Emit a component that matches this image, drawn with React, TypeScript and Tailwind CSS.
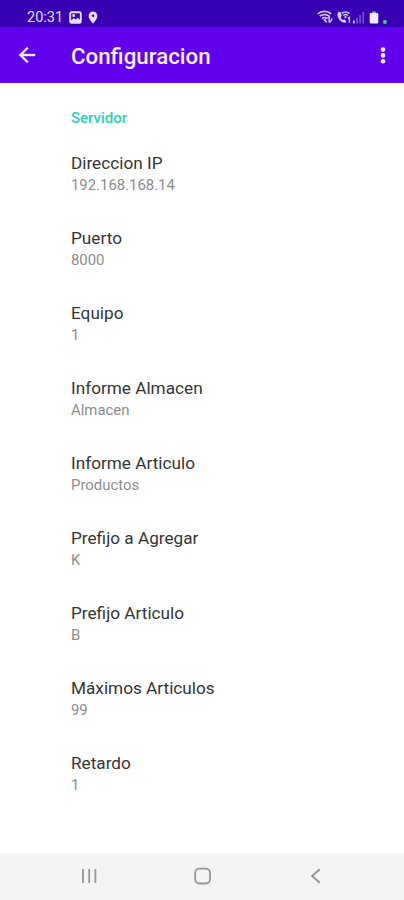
interface Preference {
  title: string;
  summary: string;
}

const preferences: Preference[] = [
  { title: "Direccion IP", summary: "192.168.168.14" },
  { title: "Puerto", summary: "8000" },
  { title: "Equipo", summary: "1" },
  { title: "Informe Almacen", summary: "Almacen" },
  { title: "Informe Articulo", summary: "Productos" },
  { title: "Prefijo a Agregar", summary: "K" },
  { title: "Prefijo Articulo", summary: "B" },
  { title: "Máximos Articulos", summary: "99" },
  { title: "Retardo", summary: "1" },
];

function StatusBar() {
  return (
    <div className="flex h-[27px] shrink-0 items-center bg-[#3700b3] pt-[7px] pl-[27px] pr-[17px] text-[#e6dcff]">
      <span className="w-[42px] pt-[2px] text-[14.5px] leading-5">20:31</span>
      {/* Image notification */}
      <svg width="13" height="13" viewBox="0 0 13 13" className="shrink-0">
        <rect x="1.2" y="1.2" width="10.6" height="10.6" rx="1.4" fill="none" stroke="currentColor" strokeWidth="1.9" />
        <path d="M2 11 2 9.400 4.800 7l2 1.600 2-2L11 9v2Z" fill="currentColor" />
        <rect x="3.400" y="3.200" width="2.600" height="2.600" fill="currentColor" />
      </svg>
      {/* Location */}
      <svg width="10" height="13" viewBox="0 0 10 13" className="ml-[6px] shrink-0">
        <path
          fillRule="evenodd"
          d="M5 .5a4.400 4.400 0 0 0-4.400 4.400C.6 8 5 12.500 5 12.500S9.400 8 9.400 4.900A4.400 4.400 0 0 0 5 .5Zm0 3a1.300 1.300 0 1 1 0 2.600 1.300 1.300 0 0 1 0-2.600Z"
          fill="currentColor"
        />
      </svg>
      <div className="ml-auto flex items-center text-[#d8ccf8]">
        {/* Wifi */}
        <svg width="17" height="14" viewBox="0 0 17 14" className="shrink-0">
          <g fill="none" stroke="currentColor" strokeWidth="1.600">
            <path d="M.8 3.800C4.400.6 10.600.6 14.200 3.800" />
            <path d="M2.800 6.200c2.600-2.300 6.800-2.300 9.400 0" />
            <path d="M5 8.600c1.400-1.200 3.600-1.200 5 0" />
          </g>
          <path d="m6.200 9.800 2-1 2.400 3.600H8.800Z" fill="currentColor" />
          <path d="m10.400 8.200 1.800-1.400v5.800M15.200 8.400 13.800 11l-1.600 1.600" fill="none" stroke="currentColor" strokeWidth="1.400" />
        </svg>
        {/* Wifi calling */}
        <svg width="16" height="14" viewBox="0 0 16 14" className="ml-[2px] shrink-0">
          <path
            d="M2.800 1.800C1.200 3 1 5 2 7.200c1 2.400 3 4.400 5.300 5.300 1.300.5 2.500.3 3.100-.9L8.500 9.200l-1.600.9C5.900 9.500 5.100 8.500 4.600 7.200l1.200-1.100L4.500 2Z"
            fill="currentColor"
          />
          <path d="M5.600 3.400c2.300-2 5.600-2 7.800 0M7.200 5.500c1.400-1.300 3.200-1.300 4.600 0" fill="none" stroke="currentColor" strokeWidth="1.500" />
          <circle cx="9.500" cy="7.200" r="1.100" fill="currentColor" />
          <path d="m11.800 8.400 1.600-1v5.400" fill="none" stroke="currentColor" strokeWidth="1.400" />
        </svg>
        {/* Signal */}
        <svg width="12" height="13" viewBox="0 0 12 13" className="ml-px shrink-0" fill="currentColor">
          <rect x="0" y="9.500" width="1.700" height="3" />
          <rect x="3.200" y="7" width="1.600" height="5.500" opacity="0.45" />
          <rect x="6.300" y="4" width="1.600" height="8.500" opacity="0.4" />
          <rect x="9.400" y="1" width="1.600" height="11.500" opacity="0.4" />
        </svg>
        {/* Battery */}
        <svg width="10" height="13" viewBox="0 0 10 13" className="ml-[4px] shrink-0">
          <rect x="3" y="0.500" width="4" height="2" rx="0.500" fill="#a58ee0" />
          <rect x="0.700" y="2" width="8.600" height="10.500" rx="1.300" fill="#f1ebff" />
        </svg>
        <span className="ml-[4px] mt-[9px] size-1 rounded-full bg-[#3fd474]" />
      </div>
    </div>
  );
}

function AppBar() {
  return (
    <header className="flex h-14 shrink-0 items-center bg-[#6200ee] text-white">
      <button type="button" className="ml-[15px]">
        <svg width="24" height="24" viewBox="0 0 24 24" fill="#f3eaff" stroke="#f3eaff" strokeWidth="0.4">
          <path d="M20 11H7.830l5.590-5.590L12 4l-8 8 8 8 1.410-1.410L7.830 13H20v-2z" />
        </svg>
      </button>
      <h1 className="ml-8 pt-px text-[22.3px] leading-7 font-medium text-[#f6f0ff]">Configuracion</h1>
      <button type="button" className="ml-auto mr-[9px]">
        <svg width="24" height="24" viewBox="0 0 24 24" fill="#f6f0ff">
          <circle cx="12" cy="6.600" r="2.300" />
          <circle cx="12" cy="12.400" r="2.300" />
          <circle cx="12" cy="18.200" r="2.300" />
        </svg>
      </button>
    </header>
  );
}

function NavigationBar() {
  return (
    <nav className="flex h-[47px] shrink-0 items-center justify-between bg-[#f4f4f4] pb-px pl-[80px] pr-[79px] text-[#969696]">
      <svg width="18" height="18" viewBox="0 0 18 18" stroke="currentColor" strokeWidth="1.800">
        <path d="M3 2v14M9.200 2v14M15.400 2v14" />
      </svg>
      <svg width="18" height="18" viewBox="0 0 18 18" fill="none" stroke="currentColor" strokeWidth="1.800">
        <rect x="1.200" y="1.700" width="14.800" height="14.800" rx="4.200" />
      </svg>
      <svg width="18" height="18" viewBox="0 0 18 18" fill="none" stroke="currentColor" strokeWidth="1.800">
        <path d="M12.800 2.200 5 9l7.800 6.800" />
      </svg>
    </nav>
  );
}

export default function App() {
  return (
    <div className="flex h-screen w-full flex-col overflow-hidden bg-white font-['Roboto',sans-serif]">
      <StatusBar />
      <AppBar />
      <main className="flex-1 pl-[71px] pt-[24px]">
        <h2 className="h-[45px] text-[15px] leading-[22px] font-medium text-[#2ad3bb]">Servidor</h2>
        {preferences.map((pref) => (
          <div key={pref.title} className="h-[75px]">
            <p className="text-[17.2px] leading-[23px] text-[#353535]">{pref.title}</p>
            <p className="text-[14.9px] leading-5 text-[#8c8c8c]">{pref.summary}</p>
          </div>
        ))}
      </main>
      <NavigationBar />
    </div>
  );
}
